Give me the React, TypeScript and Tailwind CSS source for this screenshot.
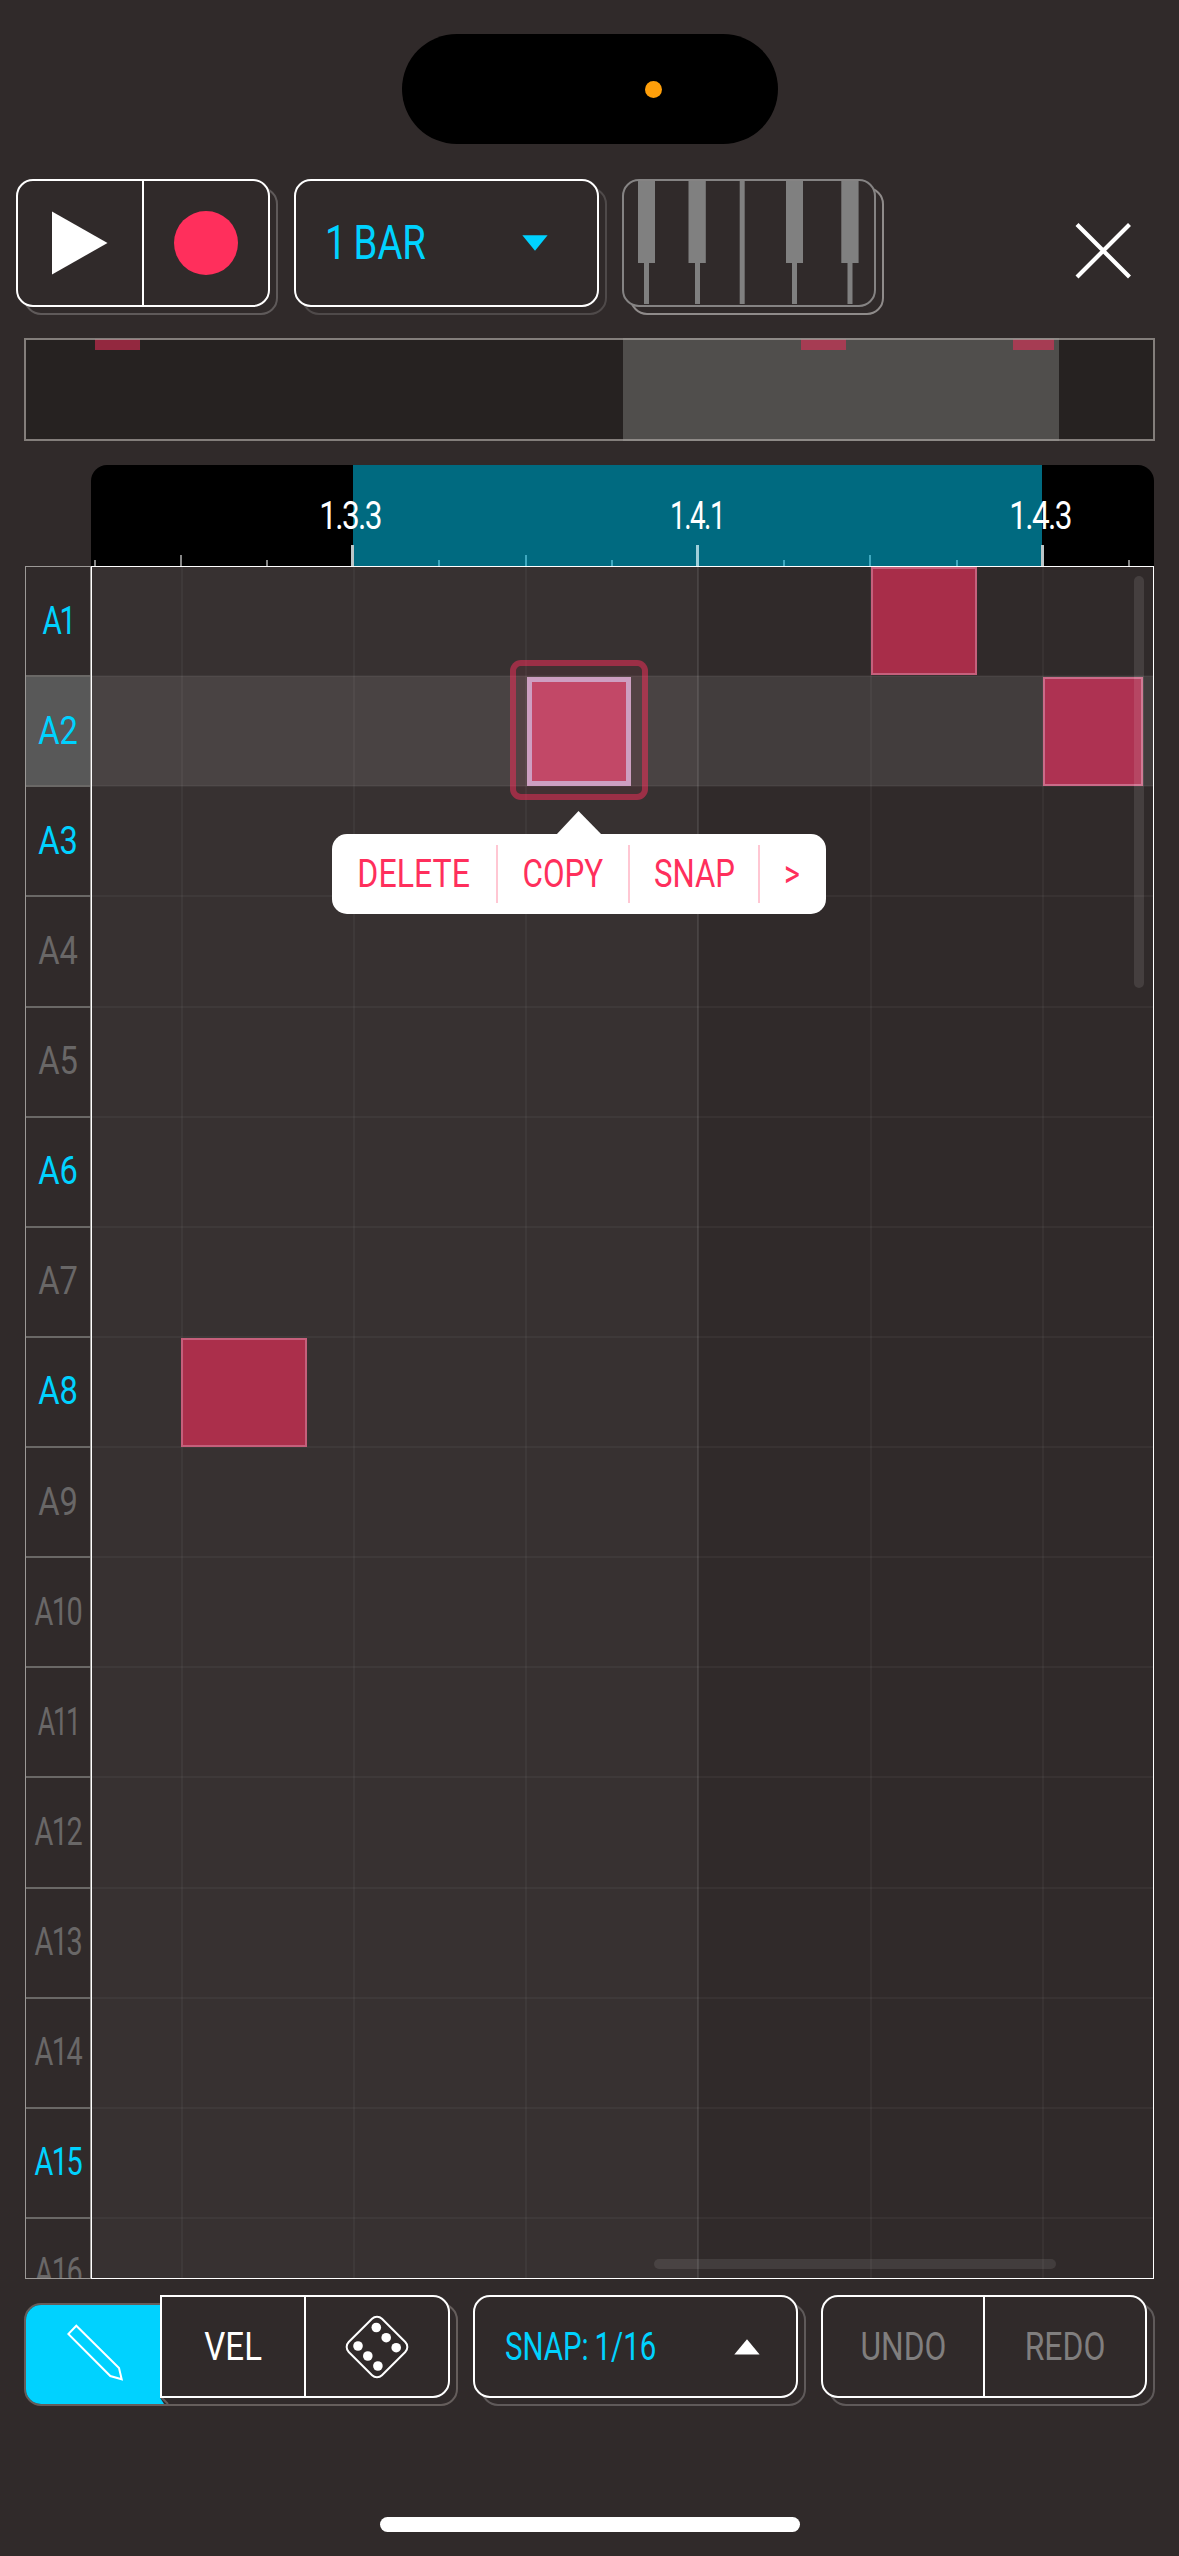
import type { ReactNode } from "react";

const lanes = Array.from({ length: 16 }, (_, i) => `A${i + 1}`);
const activeLanes = new Set(["A1", "A2", "A3", "A6", "A8", "A15"]);

// Horizontal condensing of each lane label; labels with narrow ones are set tighter.
const laneScale = (label: string) => {
  if (label === "A1") return "scale-x-[0.78] tracking-[-3px]";
  if (label === "A11") return "scale-x-[0.7] tracking-[-3px]";
  if (label.length === 3) return "scale-x-[0.76] tracking-[-2px]";
  return "scale-x-[0.86]";
};

function Label({ children, className = "" }: { children: ReactNode; className?: string }) {
  return <span className={`inline-block whitespace-nowrap leading-none ${className}`}>{children}</span>;
}

// A bordered panel with a dimmer outline offset behind it.
function Panel({
  className,
  outline = "border-[#5f5a5a]",
  border = "border-white",
  children,
}: {
  className: string;
  outline?: string;
  border?: string;
  children: ReactNode;
}) {
  return (
    <div className={`relative shrink-0 ${className}`}>
      <div className={`absolute left-2 top-2 h-full w-full rounded-[17px] border-2 ${outline}`} />
      <div className={`relative flex h-full w-full items-center overflow-hidden rounded-[17px] border-2 bg-[#302a2a] ${border}`}>
        {children}
      </div>
    </div>
  );
}

function TopBar() {
  return (
    <div className="mt-[35px] flex h-32 pl-4">
      <Panel className="w-[254px]">
        <button className="flex h-full w-[126px] items-center justify-center border-r-2 border-white">
          <svg width="56" height="64" viewBox="0 0 56 64">
            <path d="M0 0.5 55.5 32 0 63.5Z" fill="white" />
          </svg>
        </button>
        <button className="flex h-full grow items-center justify-center">
          <span className="size-16 rounded-full bg-[#ff2f5c]" />
        </button>
      </Panel>
      <Panel className="ml-6 w-[305px]" outline="border-[#4f4a4a]">
        <Label className="-mt-px ml-[29px] w-[150px] origin-left scale-x-[0.78] text-[49px] text-[#00d2ff] [word-spacing:-3px]">1 BAR</Label>
        <svg className="ml-[47px]" width="26" height="16" viewBox="0 0 26 16">
          <path d="M0.3 0.3H25.6L13 15.7Z" fill="#00d2ff" />
        </svg>
      </Panel>
      <Panel className="ml-[23px] w-[254px]" outline="border-[#8f8b8a]" border="border-[#858383]">
        <svg width="250" height="124" viewBox="0 0 250 124" fill="#808080">
          <path d="M14 0h17v82h-17zM20 82h5v41h-5zM64.5 0h17.3v82h-17.3zM71 82h5v41h-5zM115.7 0h5v123h-5zM162 0h17v82h-17zM168 82h5v41h-5zM217.3 0h17.3v82h-17.3zM223.5 82h5v41h-5z" />
        </svg>
      </Panel>
      <button className="ml-[198px] mt-[42px] h-[60px] w-[60px]">
        <svg width="60" height="60" viewBox="0 0 60 60" stroke="white" strokeWidth="4.2">
          <path d="M3 3.5 55.5 56M55.5 3.5 3 56" />
        </svg>
      </button>
    </div>
  );
}

function Overview() {
  return (
    <div className="relative ml-6 mt-[31px] h-[103px] w-[1131px] bg-[#262221]">
      <div className="absolute left-[599px] top-0 h-full w-[436px] bg-[#504e4c]" />
      <div className="absolute left-[71px] top-px h-[11px] w-[45px] bg-[#93283f]" />
      <div className="absolute left-[777px] top-px h-[11px] w-[45px] bg-[#a63c53]" />
      <div className="absolute left-[989px] top-px h-[11px] w-[41px] bg-[#a63c53]" />
      <div className="absolute inset-0 border-2 border-[#a59f9dbb]" />
    </div>
  );
}

const ticks = [
  "left-[3px] h-[6px] w-[2px] bg-[#868686]",
  "left-[89px] h-[11px] w-[2px] bg-[#868686]",
  "left-[175px] h-[6px] w-[2px] bg-[#868686]",
  "left-[260px] h-[21px] w-[3px] bg-[#bcc6c8]",
  "left-[347px] h-[6px] w-[2px] bg-[#3fa9c0]",
  "left-[434px] h-[11px] w-[2px] bg-[#3fa9c0]",
  "left-[520px] h-[6px] w-[2px] bg-[#3fa9c0]",
  "left-[605px] h-[21px] w-[3px] bg-[#9fcfda]",
  "left-[692px] h-[6px] w-[2px] bg-[#3fa9c0]",
  "left-[778px] h-[11px] w-[2px] bg-[#3fa9c0]",
  "left-[865px] h-[6px] w-[2px] bg-[#3fa9c0]",
  "left-[950px] h-[21px] w-[3px] bg-[#bcc6c8]",
  "left-[1037px] h-[6px] w-[2px] bg-[#868686]",
];

function Ruler() {
  return (
    <div className="relative ml-[91px] mt-6 flex h-[101px] w-[1063px] overflow-hidden rounded-t-2xl bg-black">
      <div className="ml-[262px] w-[689px] bg-[#006a80]" />
      {ticks.map((t) => (
        <div key={t} className={`absolute bottom-0 ${t}`} />
      ))}
      <div className="absolute left-[199px] top-[32px] w-[120px] text-center text-[38px] leading-none text-white">
        <Label className="scale-x-[0.83] tracking-[-2px]">1.3.3</Label>
      </div>
      <div className="absolute left-[546px] top-[32px] w-[120px] text-center text-[38px] leading-none text-white">
        <Label className="scale-x-[0.73] tracking-[-2px]">1.4.1</Label>
      </div>
      <div className="absolute left-[889px] top-[32px] w-[120px] text-center text-[38px] leading-none text-white">
        <Label className="scale-x-[0.83] tracking-[-2px]">1.4.3</Label>
      </div>
    </div>
  );
}

function LaneHeaders() {
  return (
    <div className="h-full w-[66px] shrink-0 overflow-hidden border border-[#9c9997] text-[38px]">
      {lanes.map((lane) => (
        <div
          key={lane}
          className={`flex h-[110.14px] items-center justify-center border-b-2 border-[#6a6866] pb-px ${
            lane === "A2" ? "bg-[#585858]" : ""
          } ${activeLanes.has(lane) ? "text-[#00d2ff]" : "text-[#696767]"}`}
        >
          <Label className={laneScale(lane)}>{lane}</Label>
        </div>
      ))}
    </div>
  );
}

const gridLines = [
  "left-[89px] bg-[#ffffff0a]",
  "left-[261px] bg-[#ffffff0a]",
  "left-[433px] bg-[#ffffff0a]",
  "left-[605px] bg-[#ffffff18]",
  "left-[778px] bg-[#ffffff0a]",
  "left-[950px] bg-[#ffffff0a]",
];

function ContextMenu() {
  return (
    <div className="absolute left-[240px] top-[267px] flex h-20 w-[494px] items-center rounded-[15px] bg-white text-[38px] text-[#ff2f5c]">
      <svg className="absolute -top-[23px] left-[224px]" width="46" height="24" viewBox="0 0 46 24">
        <path d="M0 24 22.5 0 46 24Z" fill="white" />
      </svg>
      <div className="flex w-[164px] justify-center"><Label className="scale-x-[0.845]">DELETE</Label></div>
      <div className="h-[58px] w-[2px] bg-[#ffc7d3]" />
      <div className="flex w-[130px] justify-center"><Label className="scale-x-[0.825]">COPY</Label></div>
      <div className="h-[58px] w-[2px] bg-[#ffc7d3]" />
      <div className="flex w-[128px] justify-center"><Label className="scale-x-[0.82]">SNAP</Label></div>
      <div className="h-[58px] w-[2px] bg-[#ffc7d3]" />
      <div className="flex w-[64px] justify-center"><Label className="scale-x-[0.8]">&gt;</Label></div>
    </div>
  );
}

function NoteGrid() {
  return (
    <div className="relative h-full w-[1063px] overflow-hidden border border-white">
      <div className="flex h-full">
        <div className="w-[606px] bg-[#373131]" />
      </div>
      <div className="absolute left-0 top-[109px] h-[110px] w-full bg-[#ffffff17]" />
      <div className="absolute inset-x-0 top-0">
        {lanes.map((lane) => (
          <div key={lane} className="h-[110.14px] border-b-2 border-[#ffffff0a]" />
        ))}
      </div>
      {gridLines.map((l) => (
        <div key={l} className={`absolute top-0 h-full w-[2px] ${l}`} />
      ))}
      <div className="absolute left-[779px] top-0 h-[108px] w-[106px] border-2 border-[#c5607c] bg-[#a82d49]" />
      <div className="absolute left-[951px] top-[110px] h-[109px] w-[100px] border-2 border-[#cb6b89] bg-[#ae3252]" />
      <div className="absolute left-[89px] top-[771px] h-[109px] w-[126px] border-2 border-[#c55f7b] bg-[#ab2f4b]" />
      <div className="absolute left-[418px] top-[93px] h-[140px] w-[138px] rounded-[11px] border-6 border-[#ff2d5c80] bg-[#ff2d5c0f] bg-clip-padding" />
      <div className="absolute left-[435px] top-[110px] h-[109px] w-[104px] border-[5.5px] border-[#cd9fc1] bg-[#c24867]" />
      <div className="absolute left-[1042px] top-[9px] h-[412px] w-[10px] rounded-full bg-[#ffffff1a]" />
      <div className="absolute bottom-[9px] left-[562px] h-[10px] w-[402px] rounded-full bg-[#ffffff17]" />
      <ContextMenu />
    </div>
  );
}

function EditTools() {
  return (
    <div className="relative h-[111px] w-[434px]">
      <div className="absolute inset-x-0 bottom-0 h-[103px] overflow-hidden rounded-[17px] border-2 border-[#655e5c]">
        <div className="flex h-full w-[134px] items-center bg-[#00d2ff]">
          <svg className="ml-[41px] -mt-[3px]" width="58" height="58" viewBox="67 2324 58 58" fill="none" stroke="white" strokeWidth="2">
            <path d="M76.3 2325.7 68.3 2334 110.3 2376 121.7 2379.3 119 2368Z" />
          </svg>
        </div>
        <svg className="absolute bottom-0 left-[133px]" width="12" height="8" viewBox="0 0 12 8">
          <path d="M0 0 5 8H0Z" fill="#00d2ff" />
          <path d="M2 1 9 8" stroke="#655e5c" strokeWidth="2" />
        </svg>
      </div>
      <div className="relative ml-[136px] flex h-[103px] w-[290px] rounded-r-[17px] border-2 border-white bg-[#302a2a]">
        <button className="flex w-[144px] items-center justify-center border-r-2 border-white text-[38px] text-white">
          <Label className="scale-x-[0.87]">VEL</Label>
        </button>
        <button className="flex grow items-center justify-center">
          <svg width="66" height="66" viewBox="-33 -33 66 66" fill="white">
            <rect x="-23.5" y="-23.5" width="47" height="47" rx="7" transform="rotate(45)" fill="none" stroke="white" strokeWidth="2" />
            <circle cx="-0.7" cy="-19.5" r="4.8" />
            <circle cx="9.2" cy="-9.3" r="4.8" />
            <circle cx="19.2" cy="0.7" r="4.8" />
            <circle cx="-19" cy="-1" r="4.8" />
            <circle cx="-9.2" cy="9" r="4.8" />
            <circle cx="0.9" cy="19" r="4.8" />
          </svg>
        </button>
      </div>
    </div>
  );
}

function BottomBar() {
  return (
    <div className="mt-4 flex h-[111px] pl-6 text-[38px]">
      <EditTools />
      <Panel className="ml-[15px] h-[103px] w-[325px]">
        <Label className="ml-[30px] w-[197px] origin-left scale-x-[0.775] text-[#00d2ff] [word-spacing:-2px]">SNAP: 1/16</Label>
        <svg className="ml-[32px]" width="26" height="16" viewBox="0 0 26 16">
          <path d="M0.3 15.5H25.6L13 0.2Z" fill="white" />
        </svg>
      </Panel>
      <Panel className="ml-[23px] h-[103px] w-[326px]">
        <button className="flex h-full w-[162px] items-center justify-center border-r-2 border-white text-[#807e7e]">
          <Label className="scale-x-[0.835]">UNDO</Label>
        </button>
        <button className="flex h-full grow items-center justify-center text-[#807e7e]">
          <Label className="scale-x-[0.84]">REDO</Label>
        </button>
      </Panel>
    </div>
  );
}

export default function App() {
  return (
    <main className="flex h-[2556px] w-[1179px] flex-col overflow-hidden bg-[#302a2a] font-['Roboto',sans-serif]">
      <div className="ml-[402px] mt-[34px] flex h-[110px] w-[376px] shrink-0 items-center rounded-full bg-black">
        <span className="ml-[243px] size-[17px] rounded-full bg-[#ff9f0a]" />
      </div>
      <TopBar />
      <Overview />
      <Ruler />
      <div className="ml-[25px] flex h-[1713px] shrink-0">
        <LaneHeaders />
        <NoteGrid />
      </div>
      <BottomBar />
      <div className="ml-[380px] mt-[111px] h-[15px] w-[420px] shrink-0 rounded-full bg-white" />
    </main>
  );
}
